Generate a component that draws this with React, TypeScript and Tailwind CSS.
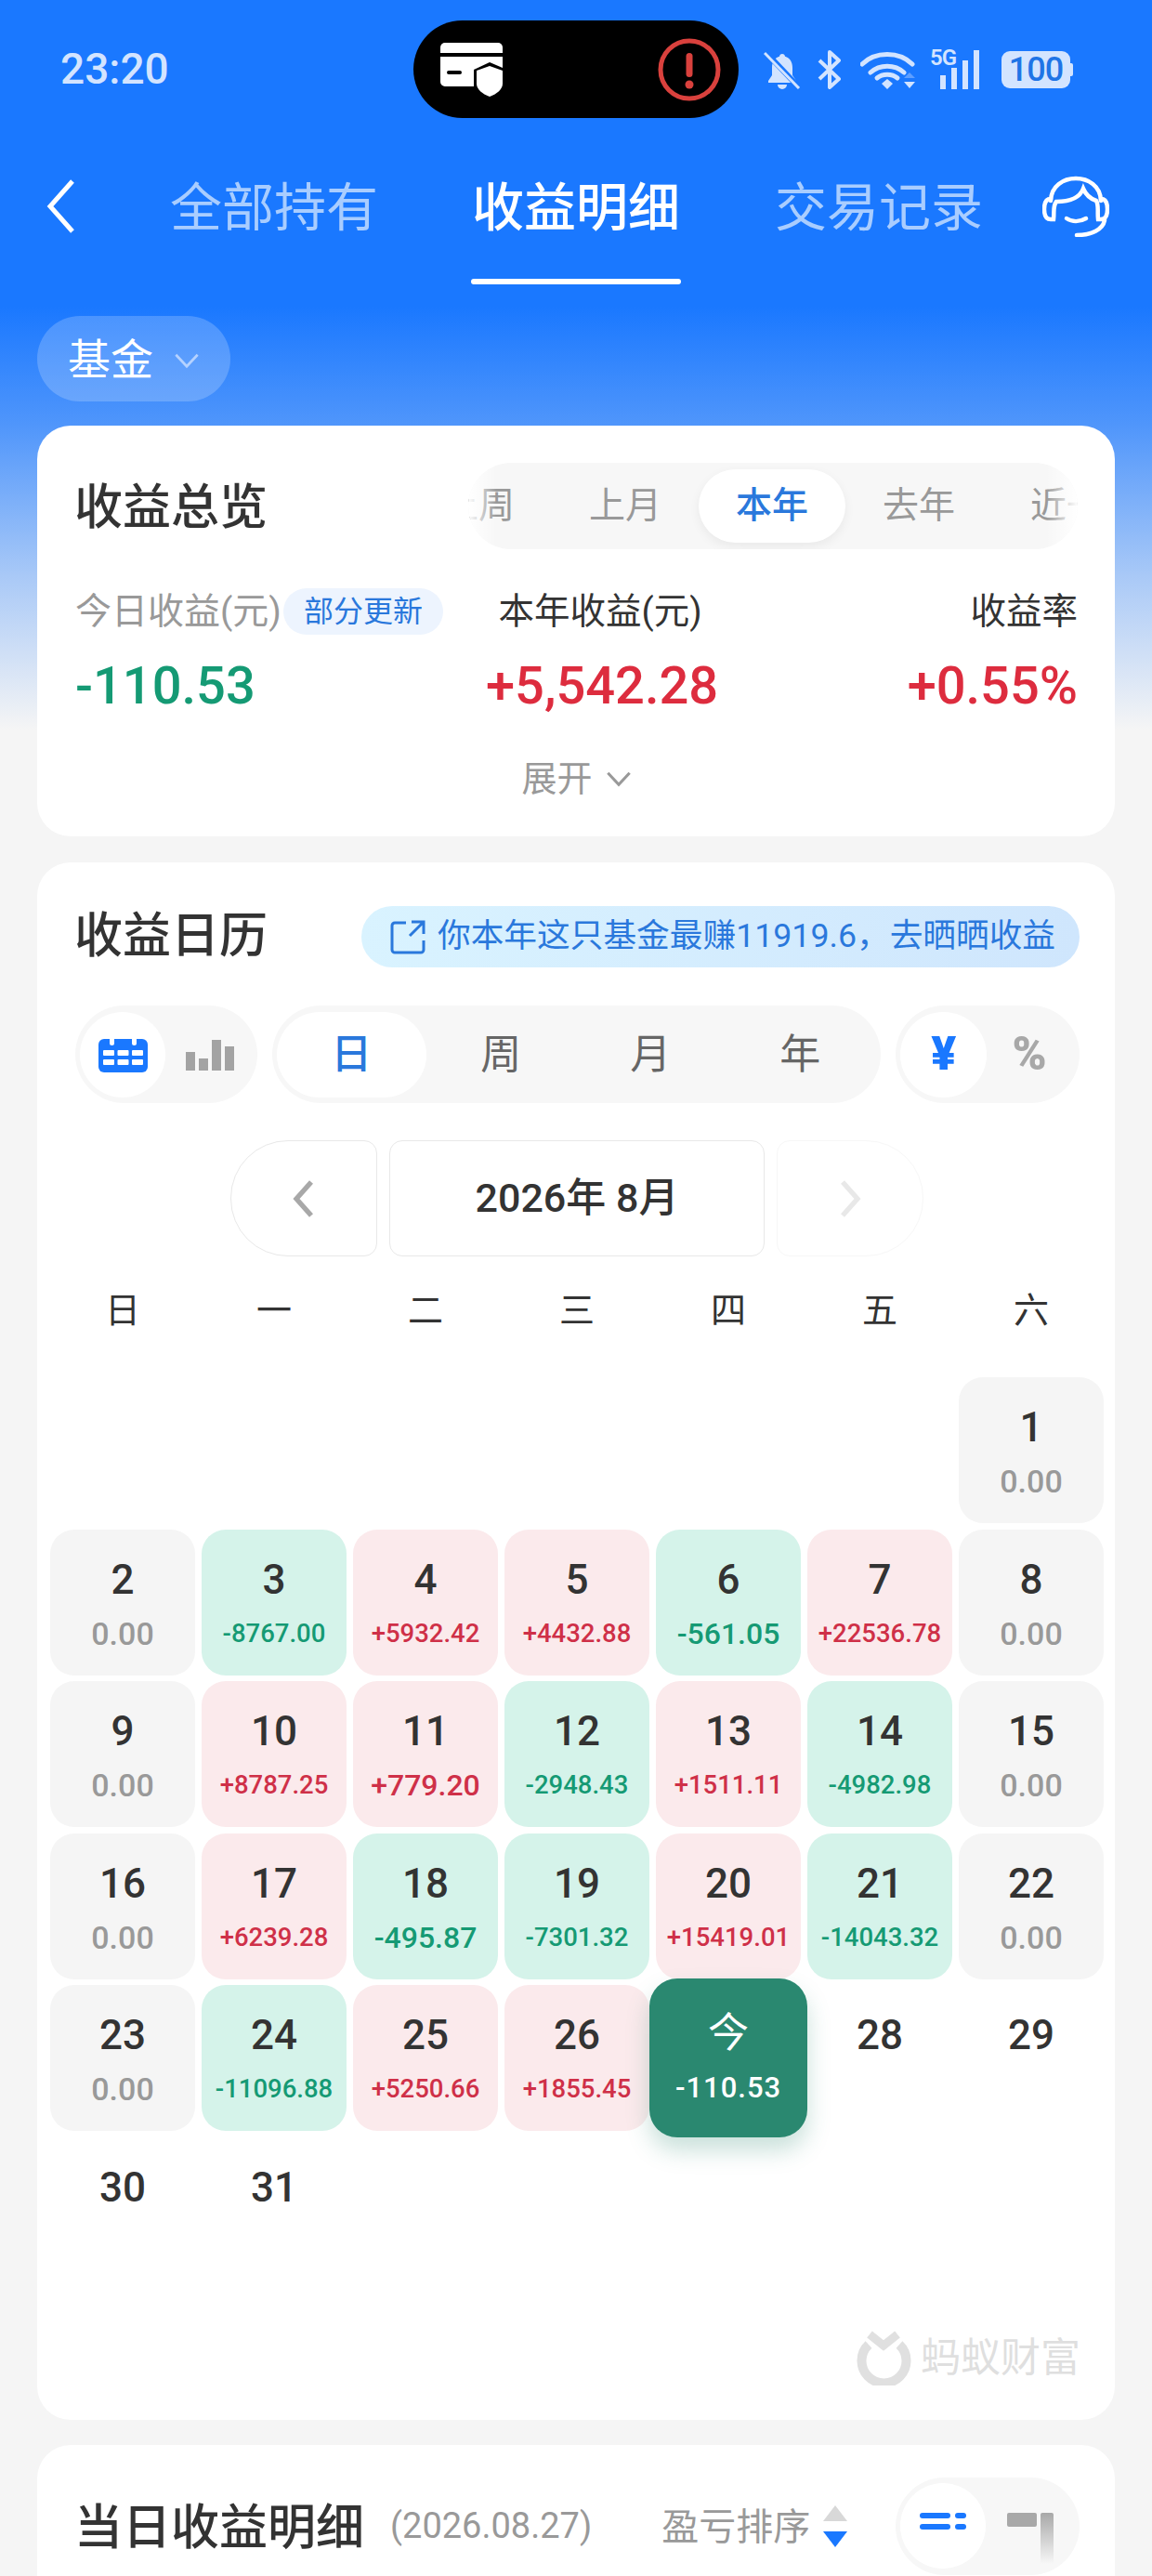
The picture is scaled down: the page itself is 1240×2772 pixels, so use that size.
const cellTone = {
	zero: "bg-[#f5f5f5] text-[#999999]",
	up: "bg-[#fbeaec] text-[#cf3048]",
	down: "bg-[#d5f3ea] text-[#159a74]",
};

const days: { day: number; value?: string }[] = [
	{ day: 1, value: "0.00" },
	{ day: 2, value: "0.00" },
	{ day: 3, value: "-8767.00" },
	{ day: 4, value: "+5932.42" },
	{ day: 5, value: "+4432.88" },
	{ day: 6, value: "-561.05" },
	{ day: 7, value: "+22536.78" },
	{ day: 8, value: "0.00" },
	{ day: 9, value: "0.00" },
	{ day: 10, value: "+8787.25" },
	{ day: 11, value: "+779.20" },
	{ day: 12, value: "-2948.43" },
	{ day: 13, value: "+1511.11" },
	{ day: 14, value: "-4982.98" },
	{ day: 15, value: "0.00" },
	{ day: 16, value: "0.00" },
	{ day: 17, value: "+6239.28" },
	{ day: 18, value: "-495.87" },
	{ day: 19, value: "-7301.32" },
	{ day: 20, value: "+15419.01" },
	{ day: 21, value: "-14043.32" },
	{ day: 22, value: "0.00" },
	{ day: 23, value: "0.00" },
	{ day: 24, value: "-11096.88" },
	{ day: 25, value: "+5250.66" },
	{ day: 26, value: "+1855.45" },
	{ day: 27, value: "-110.53" },
	{ day: 28 },
	{ day: 29 },
	{ day: 30 },
	{ day: 31 },
];

function Chevron({ dir, className }: { dir: "left" | "right" | "down"; className: string }) {
	const points = dir === "left" ? "30,3 6,30 30,57" : dir === "right" ? "6,3 30,30 6,57" : "3,6 18,22 33,6";
	return (
		<svg viewBox={dir === "down" ? "0 0 36 28" : "0 0 36 60"} fill="none" stroke="currentColor" className={className}>
			<polyline points={points} />
		</svg>
	);
}

function StatusIcons() {
	return (
		<div className="ml-[27px] flex items-center text-[#d3e4ff]">
			{/* bell muted */}
			<svg viewBox="0 0 40 42" className="h-[42px] w-[40px]">
				<path d="M20 4c-1.6 0-3 1.2-3 2.8C11.500 8.500 9 13 9 19v8l-4 6v2h30v-2l-4-6v-8c0-6-2.500-10.500-8-12.200C23 5.200 21.600 4 20 4zM15 37a5 5 0 0 0 10 0z" fill="currentColor" />
				<path d="M2 2l36 38" stroke="#1a78ff" strokeWidth="6" />
				<path d="M1 3l37 38" stroke="currentColor" strokeWidth="3" />
			</svg>
			{/* bluetooth */}
			<svg viewBox="0 0 28 42" fill="none" stroke="currentColor" strokeWidth="4" className="ml-[17px] h-[42px] w-[28px]">
				<path d="M3 11l21 20-10 9V2l10 9L3 31" strokeLinejoin="round" />
			</svg>
			{/* wifi */}
			<svg viewBox="0 0 59 42" className="ml-[19px] h-[42px] w-[59px]">
				<path d="M2 15C16 1 42 1 56 15M11 24c10-9 26-9 36 0" fill="none" stroke="currentColor" strokeWidth="5" strokeLinecap="round" />
				<path d="M18 30c6-5 16-5 22 0" fill="none" stroke="currentColor" strokeWidth="5" strokeLinecap="round" />
				<path d="M23 36l6-5 6 5-6 6z" fill="currentColor" />
				<path d="M47 30l6-6 6 6z" fill="#5f9fff" />
				<path d="M47 34h12l-6 7z" fill="currentColor" />
			</svg>
			{/* 5G signal */}
			<div className="relative ml-[16px] h-[42px] w-[57px]">
				<span className="absolute left-0 top-[-5px] text-[24px] leading-[26px] font-semibold tracking-[-1px]">5G</span>
				<div className="absolute bottom-0 left-[11px] flex items-end gap-[6px]">
					<span className="h-[15px] w-[6px] bg-[#d3e4ff]" />
					<span className="h-[23px] w-[6px] bg-[#d3e4ff]" />
					<span className="h-[31px] w-[6px] bg-[#d3e4ff]" />
					<span className="h-[42px] w-[6px] bg-[#d3e4ff]" />
				</div>
			</div>
			{/* battery */}
			<div className="ml-[20px] flex items-center">
				<div className="flex h-[40px] w-[74px] items-center justify-center rounded-[9px] bg-[#d3e4ff] text-[36px] font-medium tracking-[-1px] text-[#1f74e6]">100</div>
				<span className="h-[14px] w-[3px] rounded-r-[2px] bg-[#d3e4ff]" />
			</div>
		</div>
	);
}

function StatusBar() {
	return (
		<div className="flex h-[130px] items-center pl-[65px] pt-[19px]">
			<span className="w-[116px] -translate-y-[1px] text-[46px] leading-[50px] font-medium text-[#d3e4ff]">23:20</span>
			<div className="ml-[264px] flex h-[105px] w-[350px] items-center justify-between rounded-full bg-black pl-[29px] pr-[19px]">
				<svg viewBox="0 0 68 58" className="h-[58px] w-[68px]">
					<path d="M5 0h57a5 5 0 0 1 5 5v6H0V5a5 5 0 0 1 5-5z" fill="#fff" />
					<path d="M0 15h67v12l-14-6-17 8v18H5a5 5 0 0 1-5-5z" fill="#fff" />
					<rect x="7" y="30" width="16" height="4" rx="2" fill="#000" />
					<path d="M53 25l14 5v14c0 6-6 11-14 14-8-3-14-8-14-14V30z" fill="#fff" />
				</svg>
				<svg viewBox="0 0 68 68" className="h-[68px] w-[68px]">
					<circle cx="34" cy="34" r="31" fill="none" stroke="#d9413d" strokeWidth="5" />
					<rect x="30.500" y="16" width="7" height="26" rx="3.500" fill="#d9413d" />
					<circle cx="34" cy="50" r="4.500" fill="#d9413d" />
				</svg>
			</div>
			<StatusIcons />
		</div>
	);
}

function NavTab({ label, active }: { label: string; active?: boolean }) {
	return (
		<div className="flex w-[226px] flex-col items-center pt-[66px]">
			<span className={active ? "whitespace-nowrap text-[56px] leading-[56px] font-medium text-white" : "whitespace-nowrap text-[56px] leading-[56px] text-[#a9cdff]"}>{label}</span>
			{active && <span className="mt-[48px] h-[6px] w-full rounded-full bg-white" />}
		</div>
	);
}

function Nav() {
	return (
		<div className="flex h-[176px] items-start">
			<Chevron dir="left" className="ml-[48px] mt-[62px] h-[60px] w-[36px] stroke-[5px] text-white" />
			<div className="ml-[98px] w-[226px]">
				<NavTab label="全部持有" />
			</div>
			<div className="ml-[99px]">
				<NavTab label="收益明细" active />
			</div>
			<div className="ml-[100px]">
				<NavTab label="交易记录" />
			</div>
			<svg viewBox="0 0 72 66" fill="none" stroke="#fff" strokeWidth="4.500" strokeLinecap="round" className="ml-[67px] mt-[59px] h-[66px] w-[72px] -translate-x-[4px]">
				<path d="M9 27C10 -5 62 -5 63 27" />
				<path d="M9 25c-5 0-7 4-7 11s2 11 7 11h3c1-8-1-14 3-19 9 0 24-1 29-14 3 7 8 11 14 13 3 5 1 12 2 20h3c5 0 7-4 7-11s-2-11-7-11" />
				<path d="M26 46c6 4 14 4 21 0" />
				<path d="M67 48c-2 10-14 16-30 16" />
			</svg>
		</div>
	);
}

function OverviewCard() {
	return (
		<section className="mx-[40px] mt-[26px] h-[442px] rounded-[36px] bg-white pl-[41px] pr-[40px] pt-[40px]">
			<div className="flex h-[93px] items-center justify-between">
				<h2 className="-ml-[1px] pt-[4px] text-[52px] font-medium text-[#333333]">收益总览</h2>
				<div className="relative flex h-[93px] w-[656px] items-center overflow-hidden rounded-full bg-[#f7f7f7]">
					<div className="-ml-[68px] flex shrink-0 items-center text-[39px] text-[#999999]">
						<span className="w-[158px] text-center">上周</span>
						<span className="w-[158px] text-center">上月</span>
						<span className="flex h-[79px] w-[158px] items-center justify-center rounded-full bg-white font-medium text-[#2a78dc] shadow-[0_4px_12px_rgba(0,0,0,0.06)]">本年</span>
						<span className="w-[158px] text-center">去年</span>
						<span className="w-[158px] whitespace-nowrap pl-[41px]">近一年</span>
					</div>
					<span className="absolute inset-y-0 left-0 w-[30px] bg-gradient-to-r from-white to-transparent" />
					<span className="absolute inset-y-0 right-0 w-[34px] bg-gradient-to-l from-white to-transparent" />
				</div>
			</div>
			<div className="mt-[42px] grid grid-cols-[442px_246px_1fr]">
				<div className="flex h-[50px] items-center">
					<span className="text-[39px] text-[#999999]">今日收益(元)</span>
					<span className="ml-[2px] flex h-[50px] w-[172px] items-center justify-center rounded-full bg-[#edf4fe] text-[32px] text-[#2a78dc]">部分更新</span>
				</div>
				<div className="flex h-[50px] items-center justify-center whitespace-nowrap text-[38.500px] text-[#333333]">本年收益(元)</div>
				<div className="flex h-[50px] items-center justify-end text-[38.500px] text-[#333333]">收益率</div>
				<div className="mt-[24px] h-[60px] pt-[1px] text-[56px] leading-[60px] font-medium text-[#159a74]">-110.53</div>
				<div className="mt-[24px] h-[60px] whitespace-nowrap pt-[1px] text-center text-[56px] leading-[60px] font-medium text-[#dd2c3e]">+5,542.28</div>
				<div className="mt-[24px] h-[60px] pt-[1px] text-right text-[56px] leading-[60px] font-medium text-[#dd2c3e]">+0.55%</div>
			</div>
			<div className="mt-[49px] flex h-[44px] items-center justify-center text-[38px] text-[#999999]">
				<span>展开</span>
				<Chevron dir="down" className="ml-[14px] h-[22px] w-[28px] stroke-[4px]" />
			</div>
		</section>
	);
}

function ModeToggles() {
	return (
		<div className="mt-[41px] flex h-[105px] pl-[41px] pr-[38px]">
			<div className="flex h-[105px] w-[196px] items-center rounded-full bg-[#f7f7f7] px-[5px]">
				<div className="flex h-[92px] w-[92px] items-center justify-center rounded-full bg-white">
					<svg viewBox="0 0 53 38" className="h-[38px] w-[53px]">
						<rect y="2" width="53" height="36" rx="6" fill="#1a78ff" />
						<rect x="12" y="0" width="5" height="9" rx="2.500" fill="#fff" />
						<rect x="36" y="0" width="5" height="9" rx="2.500" fill="#fff" />
						<g fill="#fff">
							<rect x="5" y="14" width="12" height="6" rx="1" />
							<rect x="20.500" y="14" width="12" height="6" rx="1" />
							<rect x="36" y="14" width="12" height="6" rx="1" />
							<rect x="5" y="24" width="12" height="6" rx="1" />
							<rect x="20.500" y="24" width="12" height="6" rx="1" />
							<rect x="36" y="24" width="12" height="6" rx="1" />
						</g>
					</svg>
				</div>
				<div className="ml-[22px] flex h-[34px] items-end gap-[4px]">
					<span className="h-[20px] w-[10px] bg-[#a3a3a3]" />
					<span className="h-[13px] w-[10px] bg-[#a3a3a3]" />
					<span className="h-[33px] w-[10px] bg-[#a3a3a3]" />
					<span className="h-[26px] w-[10px] bg-[#a3a3a3]" />
				</div>
			</div>
			<div className="ml-[16px] flex h-[105px] w-[657px] items-center rounded-full bg-[#f7f7f7] px-[5px] text-[44px] text-[#666666]">
				<span className="flex h-[92px] w-[161px] items-center justify-center rounded-full bg-white font-medium text-[#2a78dc]">日</span>
				<span className="w-[161px] text-center">周</span>
				<span className="w-[161px] text-center">月</span>
				<span className="w-[161px] text-center">年</span>
			</div>
			<div className="ml-[16px] flex h-[105px] w-[198px] items-center rounded-full bg-[#f7f7f7] px-[5px]">
				<span className="flex h-[92px] w-[93px] items-center justify-center rounded-full bg-white text-[50px] font-black text-[#1a78ff]">¥</span>
				<span className="ml-[27px] text-[50px] font-black text-[#a8a8a8]">%</span>
			</div>
		</div>
	);
}

function DayCell({ day, value }: { day: number; value?: string }) {
	if (day === 27) {
		return (
			<div className="relative z-10 -mx-[7px] -my-[7px] flex flex-col items-center rounded-[30px] bg-[#2a8870] pt-[37px] text-white shadow-[0_14px_24px_rgba(42,136,112,0.25)]">
				<span className="text-[44px] leading-[44px]">今</span>
				<span className="mt-[19px] text-[31px] leading-[36px] font-medium tracking-[1px]">{value}</span>
			</div>
		);
	}
	if (!value) {
		return (
			<div className="flex flex-col items-center pt-[32px]">
				<span className="text-[44px] leading-[44px] font-medium text-[#333333]">{day}</span>
			</div>
		);
	}
	const tone = value === "0.00" ? cellTone.zero : value.startsWith("+") ? cellTone.up : cellTone.down;
	const size = value === "0.00" ? "text-[34px]" : value.length === 7 ? "text-[32px]" : "text-[27.500px]";
	return (
		<div className={`flex flex-col items-center rounded-[26px] pt-[32px] ${tone} ${day === 1 ? "col-start-7" : ""}`}>
			<span className="text-[44px] leading-[44px] font-medium text-[#333333]">{day}</span>
			<span className={`mt-[18px] leading-[36px] font-medium ${size}`}>{value}</span>
		</div>
	);
}

function CalendarCard() {
	return (
		<section className="mx-[40px] mt-[28px] h-[1676px] rounded-[36px] bg-white pt-[47px]">
			<div className="flex h-[66px] items-center justify-between pl-[40px] pr-[38px]">
				<h2 className="text-[52px] font-medium text-[#333333]">收益日历</h2>
				<div className="flex h-[66px] w-[773px] items-center rounded-full bg-gradient-to-r from-[#d9f3ff] to-[#cfe6fd] pl-[30px] text-[35.700px] text-[#2a78dc]">
					<svg viewBox="0 0 40 40" fill="none" stroke="currentColor" strokeWidth="3" className="h-[40px] w-[40px]">
						<path d="M18 5H6a3 3 0 0 0-3 3v26a3 3 0 0 0 3 3h28a3 3 0 0 0 3-3V24" />
						<path d="M24 4h13v13M37 4L22 19" />
					</svg>
					<span className="ml-[12px] whitespace-nowrap">你本年这只基金最赚11919.6，去晒晒收益</span>
				</div>
			</div>
			<ModeToggles />
			<div className="mt-[40px] flex h-[125px] justify-center gap-[13px] pl-[2px]">
				<div className="flex w-[158px] items-center justify-center rounded-l-[62px] rounded-r-[14px] border border-[#e8e8e8] text-[#a8a8a8]">
					<Chevron dir="left" className="h-[40px] w-[24px] stroke-[8px]" />
				</div>
				<div className="flex w-[404px] items-center justify-center rounded-[14px] border border-[#e8e8e8] text-[43px] font-medium text-[#333333]">2026年 8月</div>
				<div className="flex w-[158px] items-center justify-center rounded-l-[14px] rounded-r-[62px] border border-[#f7f7f7] text-[#e8e8e8]">
					<Chevron dir="right" className="h-[40px] w-[24px] stroke-[8px]" />
				</div>
			</div>
			<div className="mt-[33px] grid h-[50px] grid-cols-7 gap-x-[7px] pl-[14px] pr-[12px] text-[38px] leading-[50px] text-[#333333]">
				{["日", "一", "二", "三", "四", "五", "六"].map((d) => (
					<span key={d} className="text-center">
						{d}
					</span>
				))}
			</div>
			<div className="mt-[47px] grid auto-rows-[157px] grid-cols-7 gap-x-[7px] gap-y-[6.500px] pl-[14px] pr-[12px]">
				{days.map((d) => (
					<DayCell key={d.day} day={d.day} value={d.value} />
				))}
			</div>
			<div className="mt-[51px] flex h-[59px] items-center justify-end pr-[37px]">
				<svg viewBox="0 0 59 59" fill="none" stroke="#e0e0e0" className="h-[59px] w-[59px]">
					<path d="M13 15a24 24 0 1 0 33 0" strokeWidth="10" />
					<path d="M14 4l15 12L44 4" strokeWidth="9" />
				</svg>
				<span className="ml-[10px] text-[43px] leading-[59px] text-[#dfdfdf]">蚂蚁财富</span>
			</div>
		</section>
	);
}

function DetailCard() {
	return (
		<section className="mx-[40px] mt-[27px] h-[200px] rounded-t-[36px] bg-white pt-[35px]">
			<div className="flex h-[105px] items-center pl-[40px] pr-[38px]">
				<h2 className="pt-[4px] text-[52px] font-medium text-[#333333]">当日收益明细</h2>
				<span className="ml-[28px] text-[38px] text-[#999999]">(2026.08.27)</span>
				<span className="ml-[75px] pt-[2px] text-[40px] text-[#999999]">盈亏排序</span>
				<div className="ml-[14px] flex flex-col gap-[11px]">
					<span className="h-0 w-0 border-x-[13.500px] border-b-[17px] border-x-transparent border-b-[#d8d8d8]" />
					<span className="h-0 w-0 border-x-[13.500px] border-t-[17px] border-x-transparent border-t-[#1a78ff]" />
				</div>
				<div className="ml-auto flex h-[105px] w-[198px] items-start rounded-full bg-[#f7f7f7] px-[5px] pt-[6px]">
					<div className="flex h-[92px] w-[92px] justify-center rounded-full bg-white pt-[32px]">
						<div className="flex h-[18px] w-[50px] flex-col justify-between">
							<div className="flex justify-between">
								<span className="h-[6px] w-[33px] rounded-full bg-[#1a78ff]" />
								<span className="h-[6px] w-[12px] rounded-full bg-[#1a78ff]" />
							</div>
							<div className="flex justify-between">
								<span className="h-[6px] w-[33px] rounded-full bg-[#1a78ff]" />
								<span className="h-[6px] w-[12px] rounded-full bg-[#1a78ff]" />
							</div>
						</div>
					</div>
					<div className="ml-[23px] mt-[32px] flex w-[50px] items-start justify-between">
						<span className="h-[15px] w-[32px] rounded-[2px] bg-[#a8a8a8]" />
						<span className="h-[55px] w-[14px] rounded-t-[2px] bg-gradient-to-b from-[#a8a8a8] to-transparent" />
					</div>
				</div>
			</div>
		</section>
	);
}

export default function App() {
	return (
		<div className="h-[2772px] overflow-hidden bg-[#f5f5f5] bg-[linear-gradient(#1a78ff_0,#1a78ff_330px,#5096fb_458px,#a9c9f7_620px,#f5f5f5_785px)] font-[family-name:Roboto,'Noto_Sans_CJK_SC',sans-serif]">
			<StatusBar />
			<Nav />
			<div className="ml-[40px] mt-[34px] flex h-[92px] w-[208px] items-center rounded-full bg-white/20 pl-[33px] pt-[3px] text-[46px] text-white">
				<span>基金</span>
				<Chevron dir="down" className="ml-[22px] h-[22px] w-[28px] stroke-[3.5px] text-[#b5d2ff]" />
			</div>
			<OverviewCard />
			<CalendarCard />
			<DetailCard />
		</div>
	);
}
